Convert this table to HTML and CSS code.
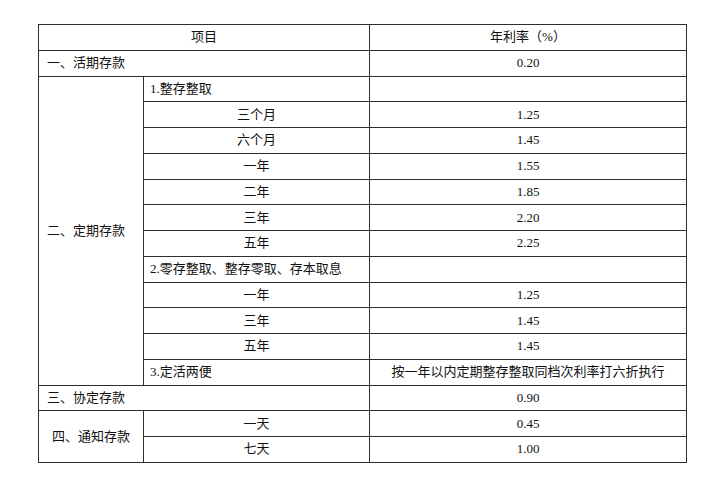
FILE: index.html
```html
<!DOCTYPE html>
<html lang="zh">
<head>
<meta charset="utf-8">
<link rel="stylesheet" href="styles.css">
</head>
<body>
<table class="rates">
  <colgroup>
    <col class="c1"><col class="c2"><col class="c3">
  </colgroup>
  <tr><td colspan="2" class="center">项目</td><td class="center">年利率（%）</td></tr>
  <tr><td colspan="2" class="left">一、活期存款</td><td class="center">0.20</td></tr>
  <tr><td rowspan="12" class="left group">二、定期存款</td><td class="left sub">1.整存整取</td><td></td></tr>
  <tr><td class="center">三个月</td><td class="center">1.25</td></tr>
  <tr><td class="center">六个月</td><td class="center">1.45</td></tr>
  <tr><td class="center">一年</td><td class="center">1.55</td></tr>
  <tr><td class="center">二年</td><td class="center">1.85</td></tr>
  <tr><td class="center">三年</td><td class="center">2.20</td></tr>
  <tr><td class="center">五年</td><td class="center">2.25</td></tr>
  <tr><td class="left sub">2.零存整取、整存零取、存本取息</td><td></td></tr>
  <tr><td class="center">一年</td><td class="center">1.25</td></tr>
  <tr><td class="center">三年</td><td class="center">1.45</td></tr>
  <tr><td class="center">五年</td><td class="center">1.45</td></tr>
  <tr><td class="left sub">3.定活两便</td><td class="center">按一年以内定期整存整取同档次利率打六折执行</td></tr>
  <tr><td colspan="2" class="left">三、协定存款</td><td class="center">0.90</td></tr>
  <tr><td rowspan="2" class="center">四、通知存款</td><td class="center">一天</td><td class="center">0.45</td></tr>
  <tr><td class="center">七天</td><td class="center">1.00</td></tr>
</table>
</body>
</html>
```
FILE: styles.css
```css
html, body {
  margin: 0;
  background: #ffffff;
}
body {
  padding: 24px 0 0 38px;
  font-family: "Liberation Serif", "Noto Sans CJK SC", serif;
  font-size: 13px;
  color: #111111;
}
.rates {
  border-collapse: collapse;
  width: 648px;
  table-layout: fixed;
}
.c1 { width: 105px; }
.c2 { width: 226px; }
.c3 { width: 317px; }
.rates td {
  border: 1px solid #2e2e2e;
  height: 24.76px;
  padding: 0;
  line-height: 16px;
  vertical-align: middle;
  white-space: nowrap;
}
.center { text-align: center; }
.left { padding-left: 8px !important; }
.sub { padding-left: 6px !important; }
.group { vertical-align: middle; }
```
